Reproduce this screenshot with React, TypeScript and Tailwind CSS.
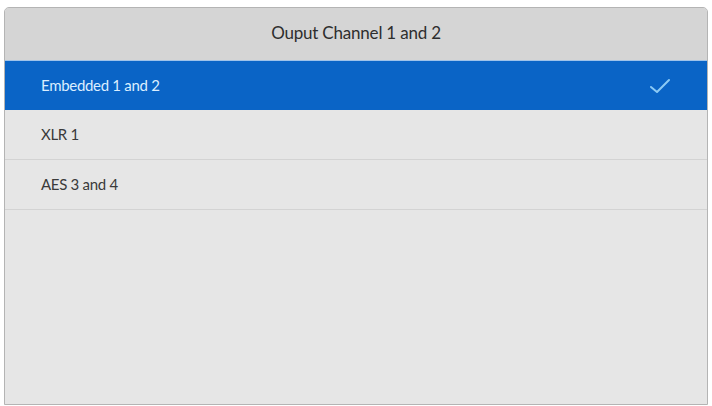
const options = ["Embedded 1 and 2", "XLR 1", "AES 3 and 4"]

export default function App() {
  const selected = 0

  return (
    <div className="w-[712px] h-[406px] bg-white pt-[7px] px-[4px] font-['Lato',sans-serif]">
      <div className="h-[398px] flex flex-col rounded-t-[5px] border border-[#b4b4b4] bg-[#e6e6e6] overflow-hidden">
        {/* Title bar */}
        <div className="h-[53px] shrink-0 flex items-center justify-center pb-[2px] bg-[#d5d5d5] border-b border-[#9fc3ea] text-[17px] tracking-[-0.2px] text-[#2e2e2e]">
          Ouput Channel 1 and 2
        </div>

        {/* Options */}
        {options.map((label, i) => (
          <div
            key={label}
            className={
              i === selected
                ? "h-[49px] shrink-0 flex items-center justify-between pl-[36px] pr-[36px] bg-[#0a64c6] text-[15px] tracking-[-0.3px] text-[#dbeeff]"
                : "h-[50px] shrink-0 flex items-center pl-[36px] border-b border-[#d3d3d3] text-[15px] tracking-[-0.3px] text-[#3a3a3a]"
            }
          >
            <span>{label}</span>
            {i === selected && (
              <svg width="22" height="18" viewBox="0 0 22 18" fill="none">
                <path d="M2 10 L8 15 L20 3" stroke="#8ccaf5" strokeWidth="2" strokeLinecap="round" strokeLinejoin="round" />
              </svg>
            )}
          </div>
        ))}

        <div className="flex-1" />
      </div>
    </div>
  )
}
